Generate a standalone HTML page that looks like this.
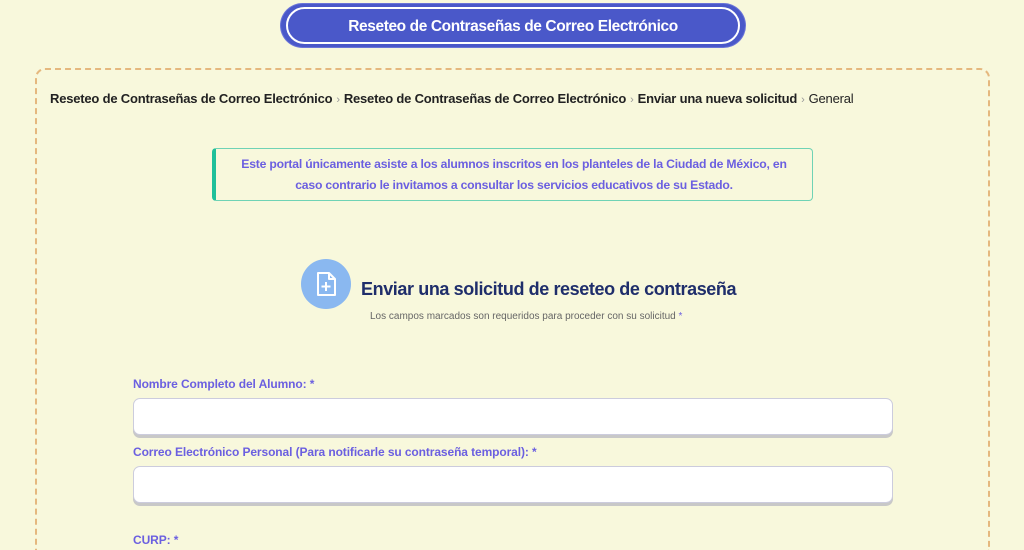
<!DOCTYPE html>
<html><head><meta charset="utf-8"><style>
*{box-sizing:border-box;margin:0;padding:0}
html,body{width:1024px;height:550px;overflow:hidden}
body{background:#f8f8dc;font-family:"Liberation Sans",sans-serif;position:relative}
.title{position:absolute;left:281px;top:4px;width:464px;height:43px;border-radius:22px;background:#4a58c9;box-shadow:0 0 0 1px #6a74d8;}
.title .in{position:absolute;left:5px;top:3px;right:5px;bottom:3px;border:2px solid #fff;border-radius:19px;color:#fff;font-weight:bold;font-size:15.5px;text-align:center;line-height:35px;letter-spacing:-0.4px}
.box{position:absolute;left:35px;top:68px;width:955px;height:484px;border:2px dashed #e5b87e;border-bottom:none;border-radius:10px 10px 0 0}
.bc{position:absolute;left:50px;top:91px;font-size:13px;color:#222;white-space:nowrap;letter-spacing:-0.2px}
.bc b{font-weight:bold}.bc span{color:#999;margin:0 4px;font-size:11px}
.note{position:absolute;left:212px;top:148px;width:601px;height:53px;border:1.5px solid #6fd3b5;border-left:4px solid #1fc09a;border-radius:4px;text-align:center;color:#6b5fe0;font-weight:bold;font-size:12.2px;line-height:21px;padding-top:5px;letter-spacing:-0.2px}
.icon{position:absolute;left:301px;top:259px;width:50px;height:50px;border-radius:50%;background:#8ab8f0}
h2{position:absolute;left:361px;top:279px;font-size:18px;color:#1f2e6b;font-weight:bold;letter-spacing:-0.4px}
.sub{position:absolute;left:370px;top:311px;font-size:10px;color:#666}
.sub i,.lbl i{color:#6b5fe0;font-style:normal}
.lbl{position:absolute;left:133px;font-size:12px;font-weight:bold;color:#6b5fe0;letter-spacing:-0.1px}
.inp{position:absolute;left:133px;width:760px;height:37px;background:#fff;border:1px solid #ccd;border-radius:7px;box-shadow:0 3px 0 #c8c8c8}
</style></head><body>
<div class="title"><div class="in">Reseteo de Contraseñas de Correo Electrónico</div></div>
<div class="box"></div>
<div class="bc"><b>Reseteo de Contraseñas de Correo Electrónico</b><span>›</span><b>Reseteo de Contraseñas de Correo Electrónico</b><span>›</span><b>Enviar una nueva solicitud</b><span>›</span>General</div>
<div class="note">Este portal únicamente asiste a los alumnos inscritos en los planteles de la Ciudad de México, en<br>caso contrario le invitamos a consultar los servicios educativos de su Estado.</div>
<div class="icon"><svg width="50" height="50" viewBox="0 0 50 50"><path d="M17 14h11l6 6v16h-17z M28 14v6h6" fill="none" stroke="#fff" stroke-width="2" stroke-linejoin="round"/><path d="M25 23v9M20.5 27.5h9" stroke="#fff" stroke-width="2"/></svg></div>
<h2>Enviar una solicitud de reseteo de contraseña</h2>
<div class="sub">Los campos marcados son requeridos para proceder con su solicitud <i>*</i></div>
<div class="lbl" style="top:377px">Nombre Completo del Alumno: <i>*</i></div>
<div class="inp" style="top:398px"></div>
<div class="lbl" style="top:445px">Correo Electrónico Personal (Para notificarle su contraseña temporal): <i>*</i></div>
<div class="inp" style="top:466px"></div>
<div class="lbl" style="top:533px">CURP: <i>*</i></div>
</body></html>
